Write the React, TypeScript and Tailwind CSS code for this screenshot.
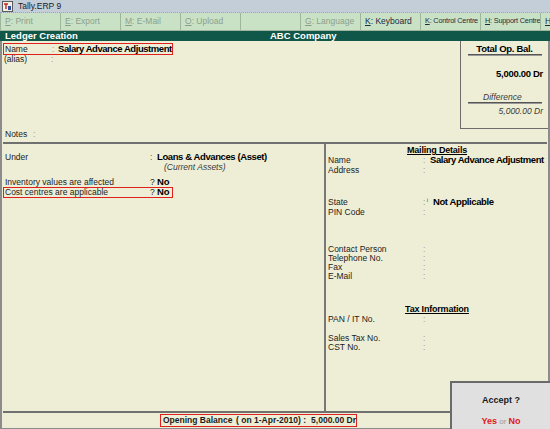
import React from 'react'

const font = { fontFamily: '"Liberation Sans", Arial, sans-serif' }

const tools = [
  { k: 'P', t: ': Print', on: false },
  { k: 'E', t: ': Export', on: false },
  { k: 'M', t: ': E-Mail', on: false },
  { k: 'O', t: ': Upload', on: false },
  { k: '', t: '', on: false },
  { k: 'G', t: ': Language', on: false },
  { k: 'K', t: ': Keyboard', on: true },
  { k: 'K', t: ': Control Centre', on: true, small: true },
  { k: 'H', t: ': Support Centre', on: true, small: true },
  { k: 'H', t: '', on: true }
]

const TallyIcon = () => (
  <svg width="11" height="11" viewBox="0 0 11 11">
    <rect x="0.5" y="0.5" width="10" height="10" fill="#f4f0e8" stroke="#5a5a5a" />
    <path d="M2 3h4M4 3v5" stroke="#c0282a" strokeWidth="1.4" />
    <path d="M6 5h3v4H6z" fill="#3050a0" />
  </svg>
)

const Field = ({ label, value, lw, h = 10, cw = 'w-[7px]' }: { label: string; value?: React.ReactNode; lw: string; h?: number; cw?: string }) => (
  <div className="flex items-center whitespace-nowrap" style={{ height: h }}>
    <span className={`${lw} shrink-0 text-[8.5px] text-[#1c1c1c]`}>{label}</span>
    <span className={`${cw} shrink-0 text-[8.5px] text-[#9a9a9a]`}>:</span>
    {value && <span className="text-[9.5px] tracking-[-0.45px] text-black font-bold">{value}</span>}
  </div>
)

export default function App() {
  return (
    <div className="w-[550px] h-[429px] bg-[#eeeed6] flex flex-col overflow-hidden relative select-none" style={font}>
      {/* Title bar */}
      <div className="h-[13px] shrink-0 bg-[#c4ced9] border-b border-dotted border-[#9aa8b8] flex items-center gap-[5px] pl-[2px]">
        <TallyIcon />
        <span className="text-[8.5px] text-[#1a1a1a] leading-none">Tally.ERP 9</span>
      </div>

      {/* Toolbar */}
      <div className="h-[18px] shrink-0 bg-[#c9e2c6] flex border-b border-[#9fb59c]">
        {tools.map((b, i) => (
          <div
            key={i}
            className={`${i === 9 ? 'w-[10px]' : 'w-[60px]'} shrink-0 h-full flex items-center pl-[4px] border-l border-[#9fb59c] whitespace-nowrap overflow-hidden ${
              b.on ? 'text-[#1e2a40]' : 'text-[#8e9e8c]'
            } ${b.small ? 'text-[7.3px] tracking-[-0.2px] pl-[2px]' : 'text-[8.5px]'}`}
          >
            {b.k && <span className="underline">{b.k}</span>}
            {b.t}
          </div>
        ))}
      </div>

      {/* Header */}
      <div className="h-[10px] shrink-0 bg-[#10574a] flex items-center text-white font-bold text-[9.5px] leading-none">
        <span className="pl-[5px] w-[240px]">Ledger Creation</span>
        <span className="pl-[30px]">ABC Company</span>
      </div>

      <div className="flex-1 flex flex-col border-l-2 border-r-2 border-b border-[#8c8c8c]">
        {/* Top section */}
        <div className="h-[101px] shrink-0 flex">
          <div className="flex-1 flex flex-col">
            <div className="mt-[2px] ml-[1px] w-[170px] h-[12px] border border-[#e0201c] flex items-center pl-[1px] overflow-hidden">
              <Field label="Name" lw="w-[47px]" cw="w-[6px]" value="Salary Advance Adjustment" h={10} />
            </div>
            <div className="pl-[2px]">
              <Field label="(alias)" lw="w-[47px]" h={9} />
            </div>
            <div className="flex-1" />
            <div className="pl-[3px] mb-[3px]">
              <Field label="Notes" lw="w-[28px]" h={10} />
            </div>
          </div>
          <div className="w-[88px] h-[88px] self-start border-l border-b border-[#6c6c6c] flex flex-col items-center">
            <div className="mt-[2px] text-[9.5px] font-bold tracking-[-0.3px] leading-[11px]">Total Op. Bal.</div>
            <div className="w-[74px] h-[2px] border-t border-b border-[#555] border-b-[#999]" />
            <div className="self-end pr-[5px] mt-[11px] text-[9.5px] font-bold tracking-[-0.3px]">5,000.00 Dr</div>
            <div className="self-start pl-[22px] mt-[11px] text-[8.5px] italic text-[#3a3a3a] leading-[10px]">Difference</div>
            <div className="w-[74px] h-[2px] border-t border-b border-[#555] border-b-[#999]" />
            <div className="self-end pr-[5px] mt-[1px] text-[8.5px] italic text-[#3a3a3a]">5,000.00 Dr</div>
          </div>
        </div>

        <div className="h-[2px] shrink-0 bg-[#707070] mx-[1px]" />

        {/* Middle section */}
        <div className="flex-1 flex">
          <div className="w-[324px] shrink-0 flex flex-col border-r-2 border-[#777] pl-[3px]">
            <div className="mt-[8px] flex items-center h-[10px] whitespace-nowrap">
              <span className="w-[145px] text-[8.5px] text-[#1c1c1c]">Under</span>
              <span className="w-[7px] text-[8.5px] text-[#555]">:</span>
              <span className="text-[9.5px] font-bold tracking-[-0.4px]">Loans &amp; Advances (Asset)</span>
            </div>
            <div className="pl-[159px] h-[10px] text-[8.5px] italic text-[#3a3a3a] leading-[10px]">(Current Assets)</div>
            <div className="mt-[5px] flex items-center h-[10px] whitespace-nowrap">
              <span className="w-[145px] text-[8.5px] text-[#1c1c1c]">Inventory values are affected</span>
              <span className="w-[7px] text-[8.5px] text-[#1c1c1c]">?</span>
              <span className="text-[9.5px] font-bold">No</span>
            </div>
            <div className="-ml-[2px] w-[170px] h-[11px] border border-[#e0201c] flex items-center pl-[1px] whitespace-nowrap">
              <span className="w-[145px] text-[8.5px] text-[#1c1c1c]">Cost centres are applicable</span>
              <span className="w-[7px] text-[8.5px] text-[#1c1c1c]">?</span>
              <span className="text-[9.5px] font-bold">No</span>
            </div>
          </div>

          <div className="flex-1 flex flex-col pl-[2px]">
            <div className="mt-[1px] h-[10px] flex justify-center pr-[2px]">
              <span className="text-[9px] font-bold underline leading-[10px] tracking-[-0.2px]">Mailing Details</span>
            </div>
            <Field label="Name" lw="w-[95px]" value="Salary Advance Adjustment" />
            <Field label="Address" lw="w-[95px]" />
            <div className="h-[22px]" />
            <div className="flex items-center h-[10px] whitespace-nowrap">
              <span className="w-[95px] text-[8.5px] text-[#1c1c1c]">State</span>
              <span className="w-[4px] text-[8.5px] text-[#9a9a9a]">:</span>
              <span className="w-[6px] text-[6px] leading-none self-start mt-[1px]">ʲ</span>
              <span className="text-[9.5px] font-bold tracking-[-0.4px]">Not Applicable</span>
            </div>
            <Field label="PIN Code" lw="w-[95px]" />
            <div className="h-[28px]" />
            <Field label="Contact Person" lw="w-[95px]" h={9} />
            <Field label="Telephone No." lw="w-[95px]" h={9} />
            <Field label="Fax" lw="w-[95px]" h={9} />
            <Field label="E-Mail" lw="w-[95px]" h={9} />
            <div className="h-[23px]" />
            <div className="h-[10px] flex justify-center pr-[2px]">
              <span className="text-[9px] font-bold underline leading-[10px] tracking-[-0.2px]">Tax Information</span>
            </div>
            <Field label="PAN / IT No." lw="w-[95px]" />
            <div className="h-[10px]" />
            <Field label="Sales Tax No." lw="w-[95px]" h={9} />
            <Field label="CST No." lw="w-[95px]" h={9} />
          </div>
        </div>

        <div className="h-[2px] shrink-0 bg-[#707070] mx-[1px]" />

        {/* Bottom row */}
        <div className="h-[15px] shrink-0 flex items-center">
          <div className="ml-[158px] w-[197px] h-[13px] border border-[#e0201c] flex items-center text-[8.5px] font-bold text-[#1c1c1c] whitespace-pre">
            <span className="pl-[2px] w-[76px]">Opening Balance</span>
            <span className="w-[76px]">( on 1-Apr-2010) :</span>
            <span>5,000.00 Dr</span>
          </div>
        </div>
      </div>

      {/* Accept box */}
      <div className="absolute right-0 bottom-0 w-[100px] h-[48px] bg-[#e0e0e0] border-l-2 border-t-2 border-[#6a6a6a] flex flex-col items-center">
        <div className="mt-[12px] text-[9px] leading-[11px] font-bold text-[#1a1a1a]">Accept ?</div>
        <div className="mt-[10px] text-[9px] leading-[11px] font-bold">
          <span className="text-[#e01818]">Yes</span>
          <span className="text-[#9a9a9a] font-normal text-[8px]"> or </span>
          <span className="text-[#e01818]">No</span>
        </div>
      </div>
    </div>
  )
}
